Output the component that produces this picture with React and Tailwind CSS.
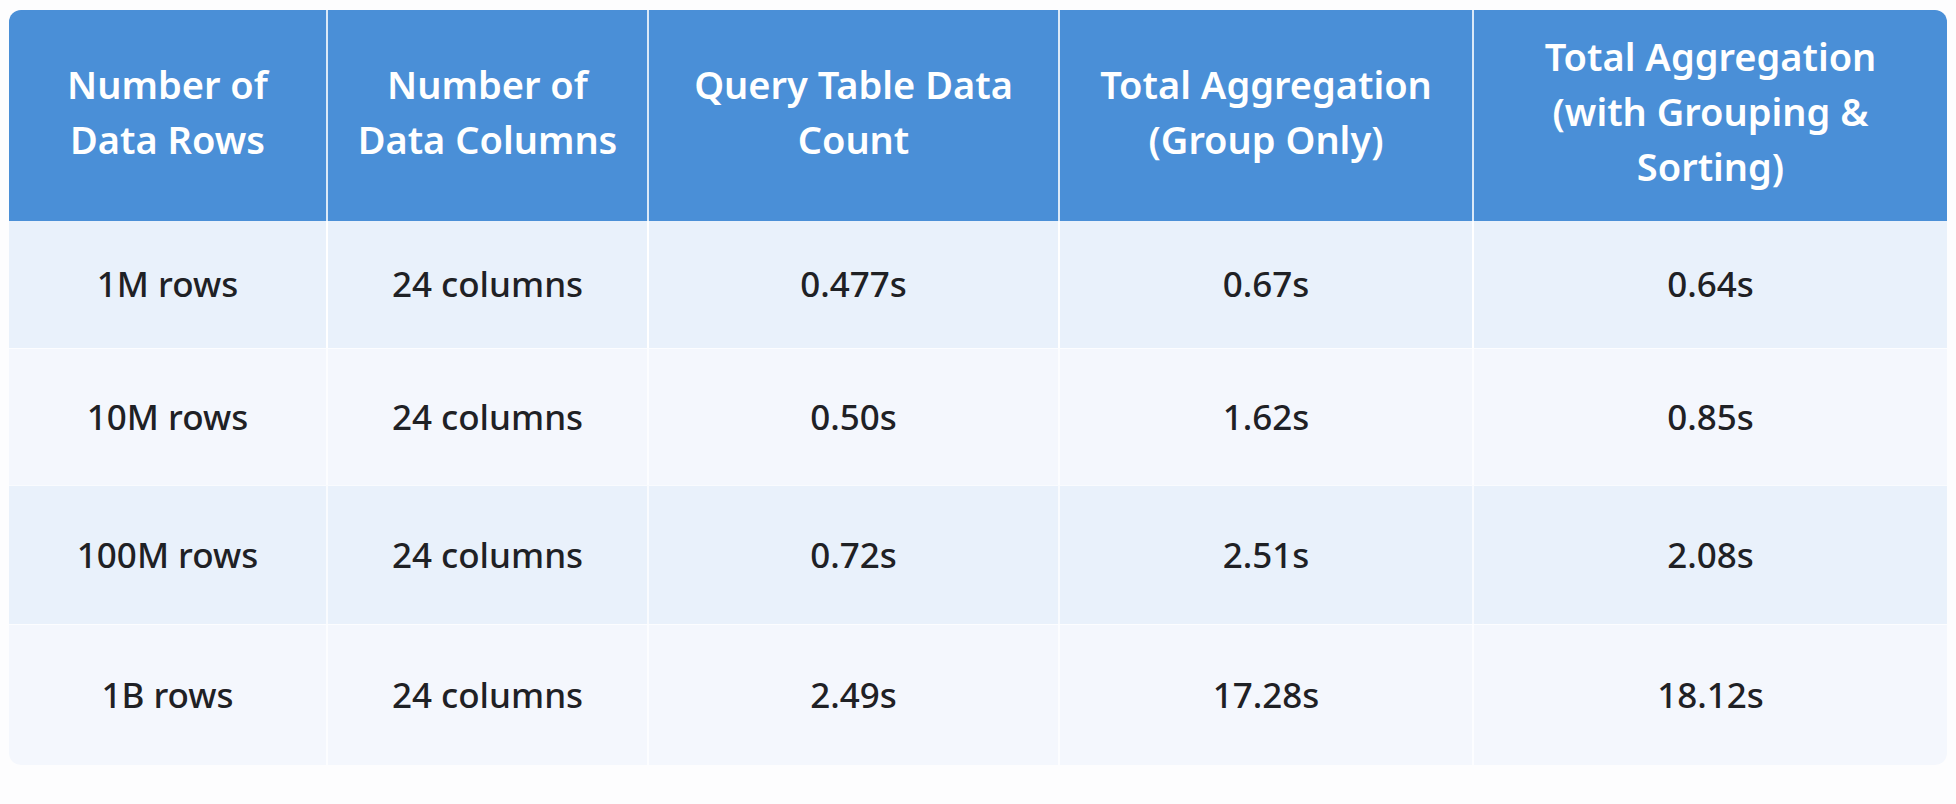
import React from 'react';

const headers = [
  ['Number of', 'Data Rows'],
  ['Number of', 'Data Columns'],
  ['Query Table Data', 'Count'],
  ['Total Aggregation', '(Group Only)'],
  ['Total Aggregation', '(with Grouping &', 'Sorting)'],
];

const rows = [
  ['1M rows', '24 columns', '0.477s', '0.67s', '0.64s'],
  ['10M rows', '24 columns', '0.50s', '1.62s', '0.85s'],
  ['100M rows', '24 columns', '0.72s', '2.51s', '2.08s'],
  ['1B rows', '24 columns', '2.49s', '17.28s', '18.12s'],
];

const App = () => {
  return (
    <div
      className="w-[1956px] h-[804px] bg-[#fdfdfe] pl-[9px] pt-[10px]"
      style={{ fontFamily: '"Noto Sans", "Open Sans", sans-serif' }}
    >
      <div className="w-[1938px] rounded-[12px] overflow-hidden grid grid-cols-[317px_321px_411px_414px_475px] grid-rows-[211px_127px_137px_139px_141px]">
        {/* Header */}
        {headers.map((lines, i) => (
          <div
            key={i}
            className={`bg-[#4a8fd7] flex flex-col items-center justify-center pb-[8px] text-white font-semibold text-[38px] leading-[55px] text-center ${
              i > 0 ? 'border-l-2 border-white/80' : ''
            }`}
          >
            {lines.map((l) => (
              <span key={l}>{l}</span>
            ))}
          </div>
        ))}

        {/* Body */}
        {rows.map((row, r) =>
          row.map((cell, c) => (
            <div
              key={`${r}-${c}`}
              className={`flex items-center justify-center text-[#1f2125] font-medium text-[35px] ${
                r % 2 === 0 ? 'bg-[#e9f1fb]' : 'bg-[#f4f7fd]'
              } ${c > 0 ? 'border-l-2 border-white' : ''} ${r > 0 ? 'border-t border-white/70' : ''}`}
            >
              {cell}
            </div>
          ))
        )}
      </div>
    </div>
  );
};

export default App;
